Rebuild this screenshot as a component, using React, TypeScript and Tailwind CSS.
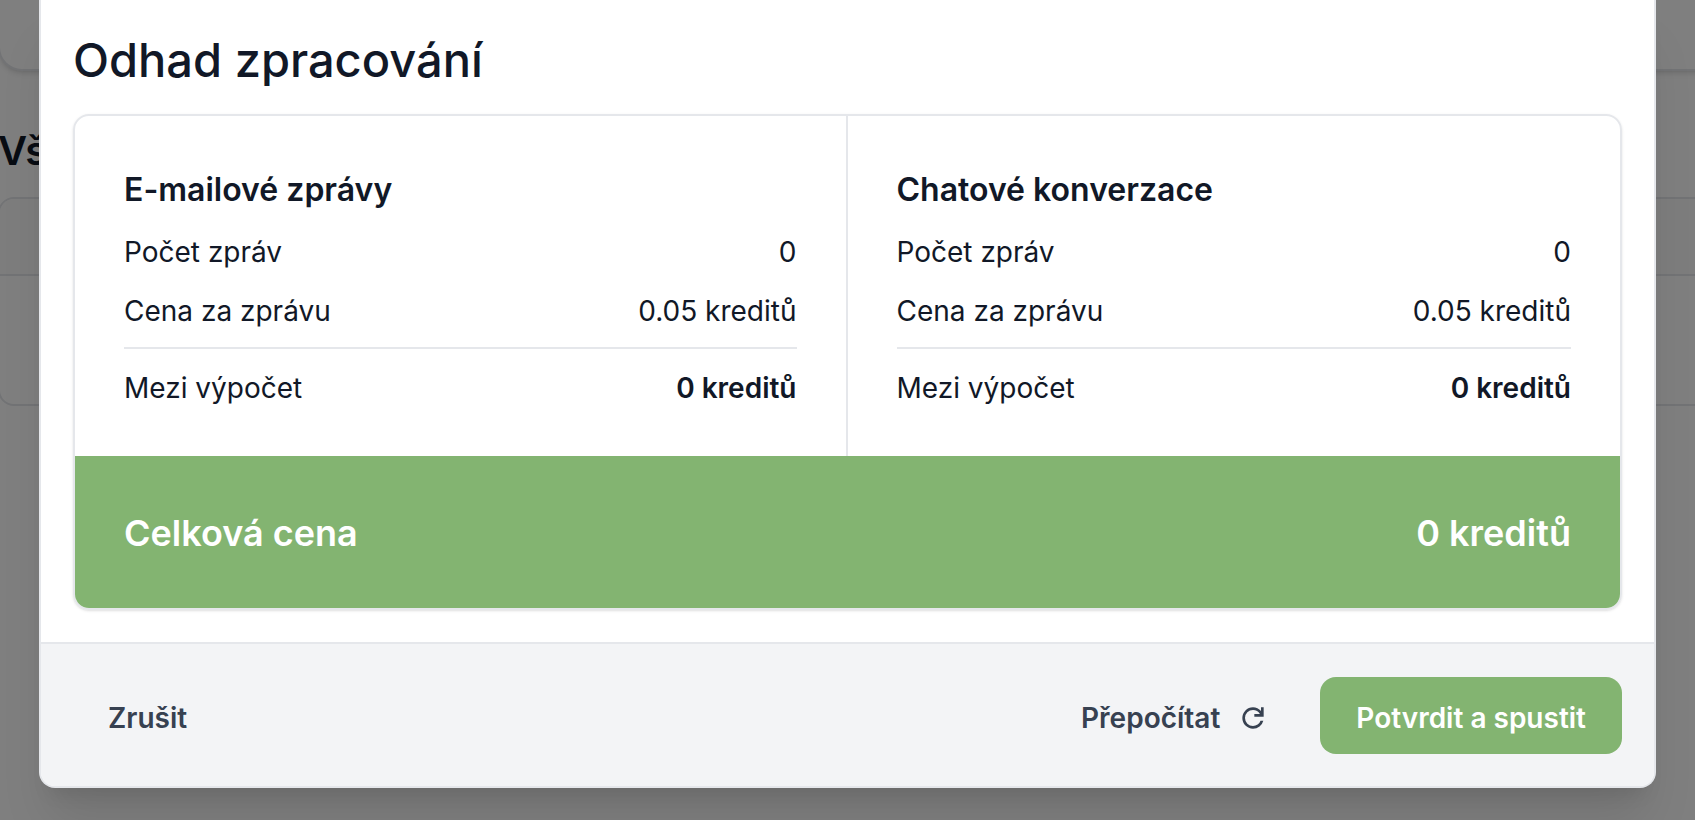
import React from "react";

type Estimate = {
  title: string;
  count: string;
  price: string;
  subtotal: string;
};

const estimates: Estimate[] = [
  { title: "E-mailové zprávy", count: "0", price: "0.05 kreditů", subtotal: "0 kreditů" },
  { title: "Chatové konverzace", count: "0", price: "0.05 kreditů", subtotal: "0 kreditů" },
];

function RefreshIcon() {
  return (
    <svg viewBox="0 -960 960 960" className="size-8 shrink-0" fill="currentColor" aria-hidden="true">
      <path d="M480-160q-134 0-227-93t-93-227q0-134 93-227t227-93q69 0 132 28.5T720-690v-110h80v280H520v-80h168q-32-56-87.5-88T480-720q-100 0-170 70t-70 170q0 100 70 170t170 70q77 0 139-44t87-116h84q-28 106-114 173t-196 67Z" />
    </svg>
  );
}

function EstimateColumn({ title, count, price, subtotal }: Estimate) {
  return (
    <section className="px-[49px] pt-[50px] pb-[47px]">
      <h3 className="text-[32px] leading-[48px] font-semibold">{title}</h3>
      <dl className="mt-[17px] text-[28px] leading-[42px]">
        <div className="flex justify-between">
          <dt>Počet zpráv</dt>
          <dd>{count}</dd>
        </div>
        <div className="mt-[17px] flex justify-between border-b-2 border-[#e5e7eb] pb-[15px]">
          <dt>Cena za zprávu</dt>
          <dd>{price}</dd>
        </div>
        <div className="mt-[18px] flex justify-between">
          <dt>Mezi výpočet</dt>
          <dd className="font-semibold">{subtotal}</dd>
        </div>
      </dl>
    </section>
  );
}

function PageBehind() {
  return (
    <div className="-mr-8 -ml-0.5" aria-hidden="true">
      <div className="h-[71px] rounded-b-3xl border-2 border-t-0 border-[#e5e7eb] bg-white shadow-md" />
      <h1 className="mt-[50px] text-[40px] leading-[60px] font-semibold">Vš</h1>
      <div className="mt-4 overflow-hidden rounded-2xl border-2 border-[#e5e7eb]">
        <div className="h-[77px] border-b-2 border-[#e5e7eb] bg-[#fafafa]" />
        <div className="h-32" />
      </div>
    </div>
  );
}

export default function App() {
  return (
    <div className="relative min-h-screen overflow-hidden bg-white font-['Inter',sans-serif] text-[#111827]">
      <PageBehind />
      <div className="absolute inset-0 bg-black/50 px-[39px]">
        <div
          role="dialog"
          aria-labelledby="estimate-title"
          className="overflow-hidden rounded-b-2xl border-2 border-t-0 border-[#e5e7eb] bg-white shadow-[0_40px_50px_-10px_rgba(0,0,0,0.1),0_16px_20px_-12px_rgba(0,0,0,0.1)]"
        >
          <div className="px-8 pt-6 pb-8">
            <h2 id="estimate-title" className="text-[47px] leading-[72px] font-medium">
              Odhad zpracování
            </h2>
            <div className="mt-[18px] overflow-hidden rounded-2xl border-2 border-[#e5e7eb] shadow-sm">
              <div className="grid grid-cols-2 divide-x-2 divide-[#e5e7eb]">
                {estimates.map((e) => (
                  <EstimateColumn key={e.title} {...e} />
                ))}
              </div>
              <div className="flex justify-between bg-[#83b471] px-[49px] pt-[49px] pb-[47px] text-[36px] leading-[56px] font-semibold text-white">
                <span>Celková cena</span>
                <span>0 kreditů</span>
              </div>
            </div>
          </div>
          <div className="flex items-center justify-between border-t-2 border-[#e5e7eb] bg-[#f3f4f6] px-8 pt-[33px] pb-8 text-[28px] leading-[42px] font-semibold text-[#374151]">
            <button type="button" className="rounded-2xl px-[35px] pt-5 pb-[15px]">
              Zrušit
            </button>
            <div className="flex items-center gap-4">
              <button type="button" className="flex items-center gap-[17px] rounded-2xl px-[35px] pt-5 pb-[15px]">
                Přepočítat
                <RefreshIcon />
              </button>
              <button type="button" className="rounded-2xl bg-[#83b471] px-9 pt-5 pb-[15px] text-white">
                Potvrdit a spustit
              </button>
            </div>
          </div>
        </div>
      </div>
    </div>
  );
}
